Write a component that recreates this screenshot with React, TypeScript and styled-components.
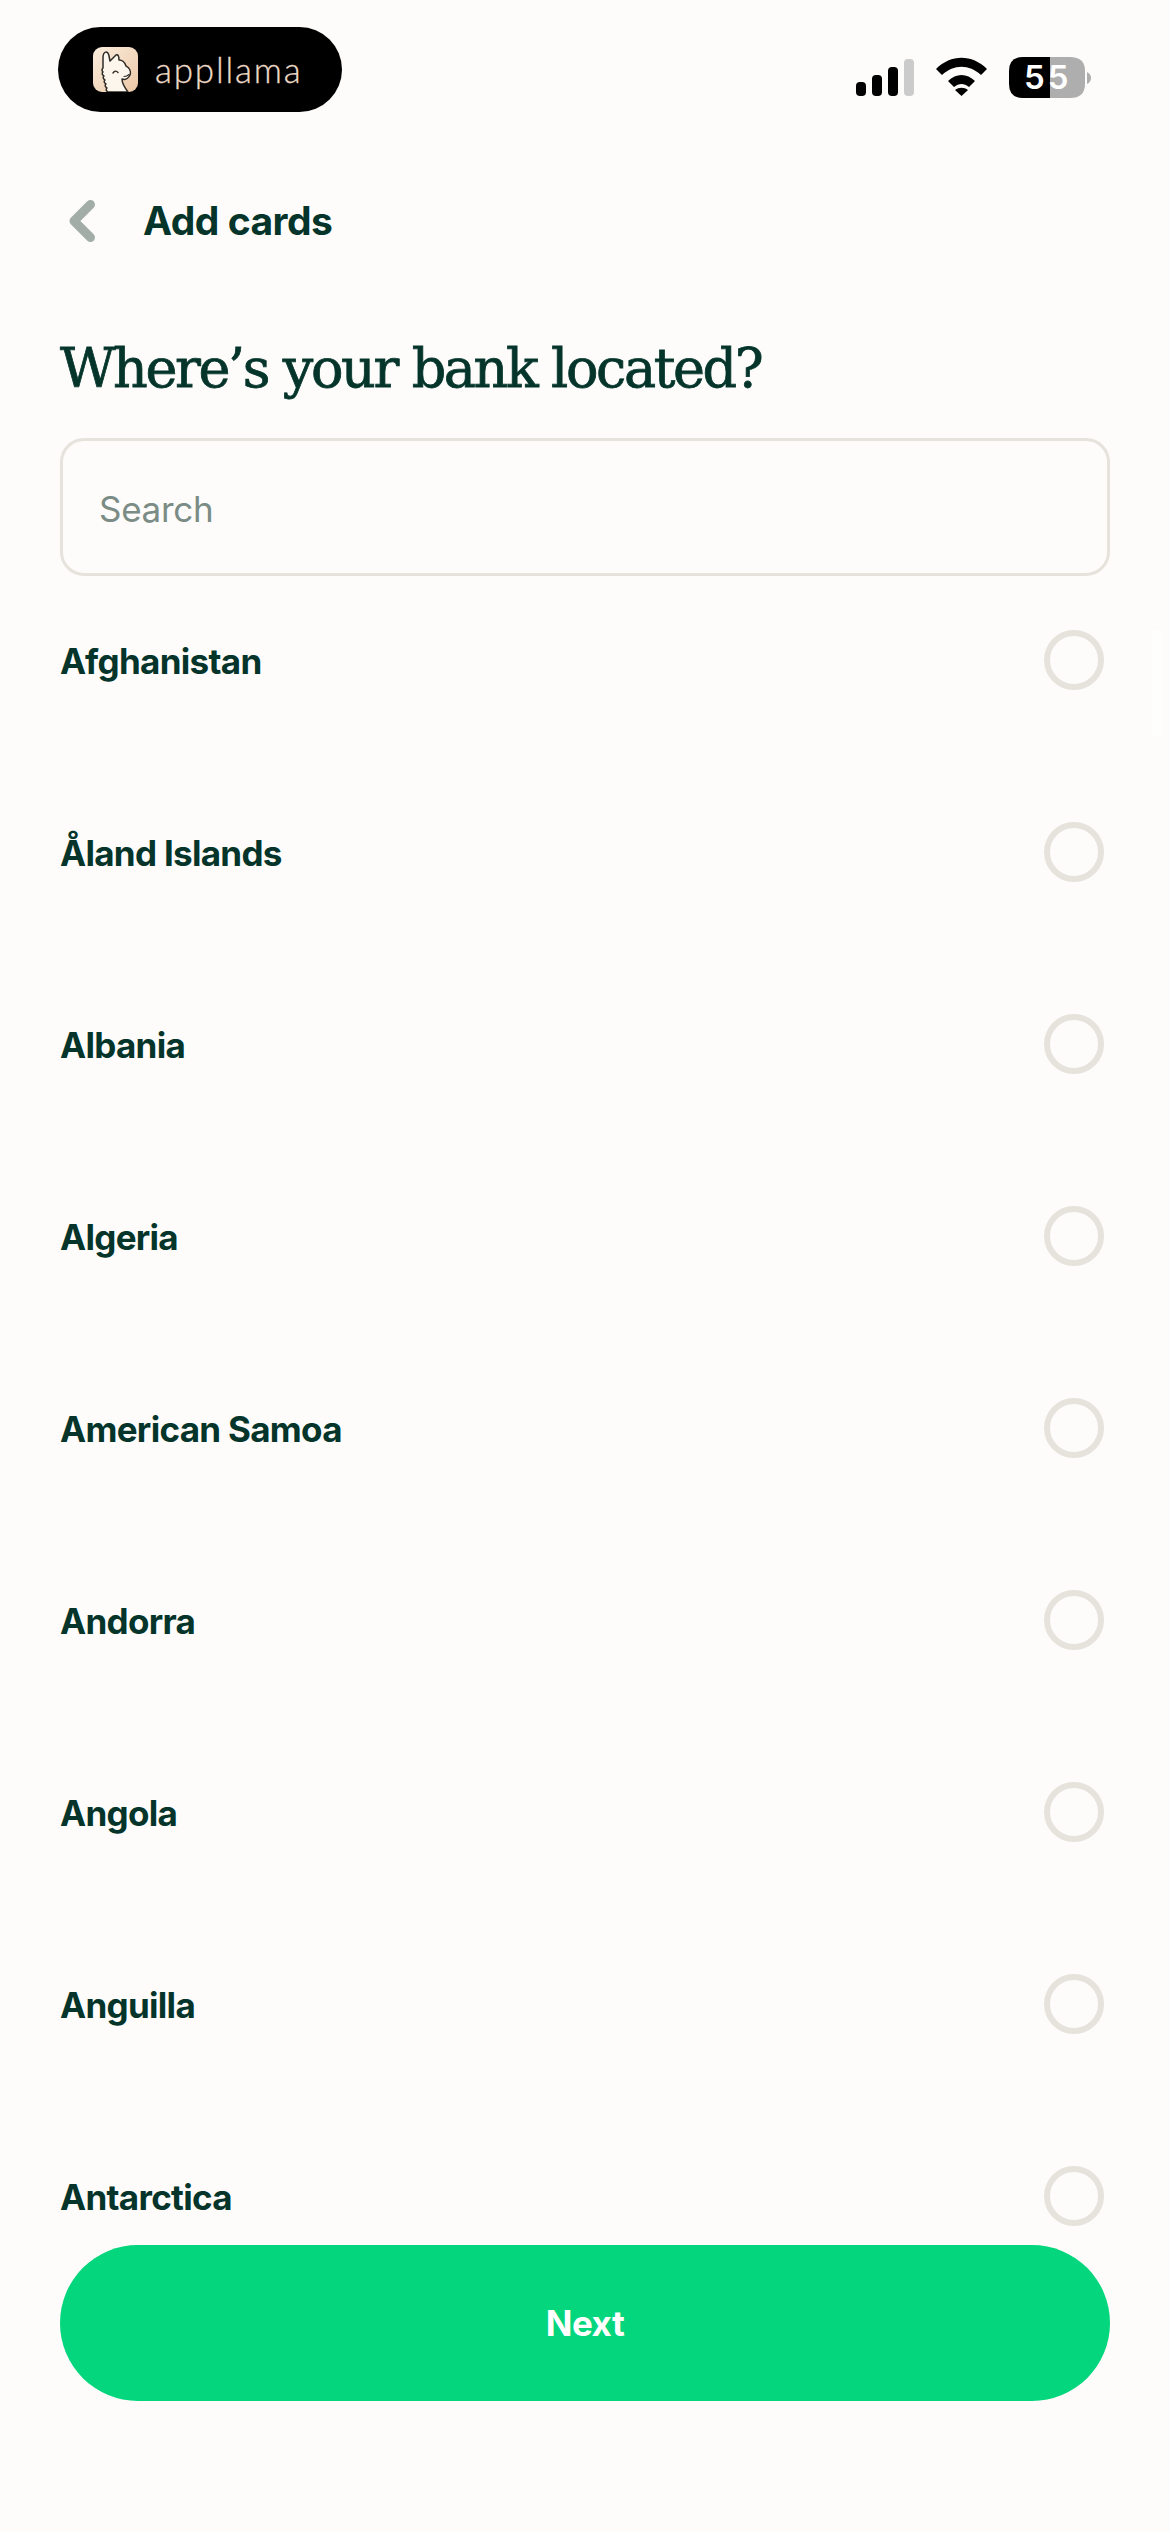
import React, { FC } from 'react';
import styled, { createGlobalStyle } from 'styled-components';

const GlobalStyle = createGlobalStyle`
  html, body {
    margin: 0;
    padding: 0;
    background: #FDFCFA;
  }
`;

const Page = styled.div`
  position: relative;
  width: 1170px;
  height: 2532px;
  overflow: hidden;
  box-sizing: border-box;
  padding: 27px 60px 0 58px;
  background: #FDFCFA;
  color: #04342A;
  font-family: Inter, "Liberation Sans", sans-serif;
`;

const StatusBar = styled.div`
  display: flex;
  align-items: center;
  justify-content: space-between;
  height: 85px;
`;

const LogoPill = styled.div`
  display: flex;
  align-items: center;
  gap: 17px;
  width: 284px;
  height: 85px;
  box-sizing: border-box;
  padding-left: 35px;
  border-radius: 43px;
  background: #000;
`;

const LogoMark = styled.svg`
  width: 45px;
  height: 45px;
  flex: none;
`;

const LogoWord = styled.span`
  font-family: Lato, sans-serif;
  font-weight: 300;
  font-size: 35px;
  line-height: 45px;
  letter-spacing: 1.8px;
  color: #EBD9C6;
  -webkit-text-stroke: 0.3px #EBD9C6;
`;

const StatusIcons = styled.svg`
  width: 236px;
  height: 42px;
  margin: 17px 18px 0 0;
`;

const BatteryLabel = styled.text`
  font-family: Inter, sans-serif;
  font-weight: 600;
  font-size: 33px;
  letter-spacing: 3px;
  fill: #fff;
`;

const BackRow = styled.div`
  display: flex;
  align-items: center;
  height: 42px;
  margin-top: 88px;
  padding-left: 10px;
`;

const BackIcon = styled.svg`
  width: 27px;
  height: 42px;
  flex: none;
`;

const BackTitle = styled.div`
  margin: -2px 0 0 48px;
  font-size: 39px;
  font-weight: 700;
  letter-spacing: -0.5px;
`;

const Heading = styled.h1`
  margin: 91px 0 0 2px;
  font-family: "DejaVu Serif", serif;
  font-size: 54px;
  font-weight: 400;
  line-height: 72px;
  letter-spacing: -2.4px;
  white-space: nowrap;
  -webkit-text-stroke: 0.8px #04342A;
`;

const SearchBox = styled.div`
  display: flex;
  align-items: center;
  height: 138px;
  box-sizing: border-box;
  margin: 33px 0 0 2px;
  padding: 4px 0 0 36px;
  border: 3px solid #E6E2DC;
  border-radius: 24px;
  font-size: 35px;
  letter-spacing: -0.3px;
  color: #7A8C85;
`;

const CountryList = styled.div`
  display: flex;
  flex-direction: column;
  gap: 132px;
  margin: 54px 0 0 2px;
  height: 1596px;
`;

const CountryRow = styled.div`
  display: flex;
  align-items: center;
  justify-content: space-between;
  height: 60px;
  padding-right: 6px;
  font-size: 35px;
  font-weight: 700;
  letter-spacing: -0.7px;
`;

const CountryName = styled.span`
  margin-top: 2px;
`;

const Radio = styled.span`
  width: 60px;
  height: 60px;
  box-sizing: border-box;
  border: 6px solid #E6E2DC;
  border-radius: 50%;
`;

const NextButton = styled.div`
  display: flex;
  align-items: center;
  justify-content: center;
  height: 156px;
  margin: 19px 0 0 2px;
  border-radius: 78px;
  background: #03D67C;
  color: #fff;
  font-size: 35px;
  font-weight: 700;
  letter-spacing: -0.5px;
`;

// the faint scroll thumb that sits over the list
const ScrollThumb = styled.div`
  position: absolute;
  top: 629px;
  right: 8px;
  width: 10px;
  height: 108px;
  border-radius: 5px;
  background: #FEFEFD;
`;

const countries = [
  'Afghanistan',
  'Åland Islands',
  'Albania',
  'Algeria',
  'American Samoa',
  'Andorra',
  'Angola',
  'Anguilla',
  'Antarctica',
];

const App: FC = () => (
  <>
    <GlobalStyle />
    <Page>
      <StatusBar>
        <LogoPill>
          <LogoMark viewBox="0 0 45 45">
            <defs>
              <linearGradient id="tile" x1="0" y1="0" x2="1" y2="1">
                <stop offset="0" stopColor="#FBEDDD" />
                <stop offset="1" stopColor="#EBC8A6" />
              </linearGradient>
            </defs>
            <rect width="45" height="45" rx="9" fill="url(#tile)" />
            <path
              d="M15 45 q-3 -2 -1 -4 q-3 -2 -1 -4 q-3 -2 -1 -4 q-3 -2 -1 -4 q-3 -2 -1 -4 q-2 -2 0 -4 L10 11 C10 4 15 3 16 9 L17 14 L23 8 C25 7 26 9 26 13 C30 13 32 16 33 19 C37 21 38 25 37 28 C35 32 32 33 29 32 C29 37 32 41 35 45 Z"
              fill="#FDF6EC"
              stroke="#2E2B27"
              strokeWidth="1.5"
              strokeLinejoin="round"
            />
            <path d="M20 26 Q22.5 22.5 25 25.5" fill="none" stroke="#2E2B27" strokeWidth="1.4" strokeLinecap="round" />
            <path d="M31 29.5 Q34 29.5 36 27.5" fill="none" stroke="#2E2B27" strokeWidth="1.1" strokeLinecap="round" />
          </LogoMark>
          <LogoWord>appllama</LogoWord>
        </LogoPill>
        <StatusIcons viewBox="0 0 236 42">
          <rect x="0" y="25" width="10" height="14" rx="4" fill="#000" />
          <rect x="16" y="18" width="10" height="21" rx="4" fill="#000" />
          <rect x="32" y="10" width="10" height="29" rx="4" fill="#000" />
          <rect x="48" y="2" width="10" height="37" rx="4" fill="#CBCBCB" />
          <path d="M80 12 C95 -3 116 -3 131 12 L125 18 C113 7 98 7 86 18 Z" fill="#000" />
          <path d="M92 24 C100 16 111 16 119 24 L113 30 C108 26 103 26 98 30 Z" fill="#000" />
          <path d="M105.5 39 L99 33 C103 30 108 30 112 33 Z" fill="#000" />
          <path d="M194 0 H214 Q229 0 229 14 V27 Q229 41 214 41 H194 Z" fill="#AEAEAE" />
          <path d="M194 0 H167 Q153 0 153 14 V27 Q153 41 167 41 H194 Z" fill="#000" />
          <path d="M231 15 Q235 17 235 21 Q235 25 231 27 Z" fill="#AEAEAE" />
          <BatteryLabel x="168" y="32">55</BatteryLabel>
        </StatusIcons>
      </StatusBar>
      <BackRow>
        <BackIcon viewBox="0 0 27 42">
          <path d="M22.5 4.5 L6 21 L22.5 37.5" fill="none" stroke="#A3ADA8" strokeWidth="9" strokeLinecap="round" strokeLinejoin="round" />
        </BackIcon>
        <BackTitle>Add cards</BackTitle>
      </BackRow>
      <Heading>Where’s your bank located?</Heading>
      <SearchBox>Search</SearchBox>
      <CountryList>
        {countries.map((name) => (
          <CountryRow key={name}>
            <CountryName>{name}</CountryName>
            <Radio />
          </CountryRow>
        ))}
      </CountryList>
      <NextButton>Next</NextButton>
      <ScrollThumb />
    </Page>
  </>
);

export default App;
